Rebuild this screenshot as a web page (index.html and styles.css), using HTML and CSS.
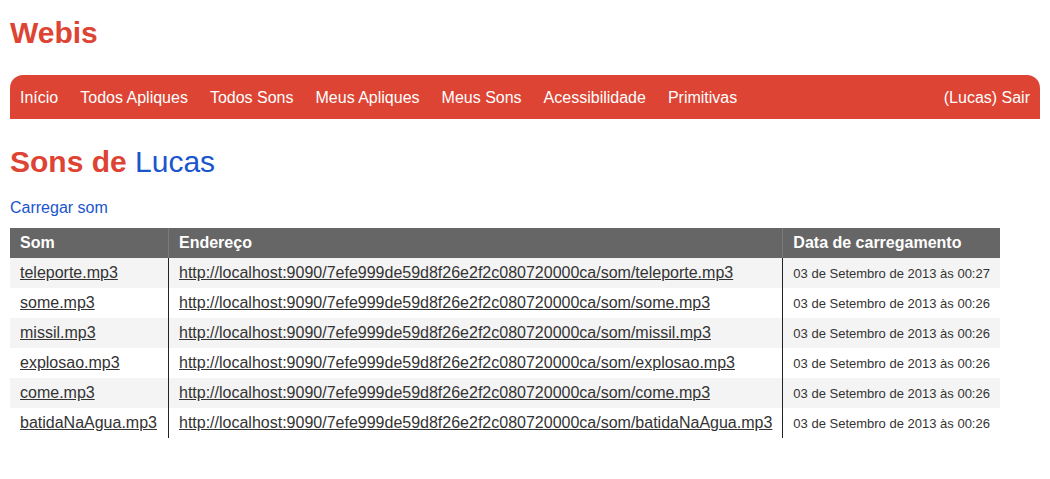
FILE: index.html
```html
<!DOCTYPE html>
<html lang="pt">
<head>
<meta charset="utf-8">
<title>Webis</title>
<link rel="stylesheet" href="styles.css">
</head>
<body>
<header class="site-header">
  <h1 class="logo">Webis</h1>
  <nav class="menu">
    <ul class="menu-left">
      <li><a href="#">Início</a></li>
      <li><a href="#">Todos Apliques</a></li>
      <li><a href="#">Todos Sons</a></li>
      <li><a href="#">Meus Apliques</a></li>
      <li><a href="#">Meus Sons</a></li>
      <li><a href="#">Acessibilidade</a></li>
      <li><a href="#">Primitivas</a></li>
    </ul>
    <a class="menu-right" href="#">(Lucas) Sair</a>
  </nav>
</header>
<main class="content">
  <h2 class="page-title">Sons de <span class="user">Lucas</span></h2>
  <p class="actions"><a href="#">Carregar som</a></p>
  <table class="sounds">
    <thead>
      <tr><th>Som</th><th>Endereço</th><th>Data de carregamento</th></tr>
    </thead>
    <tbody>
      <tr><td><a href="#">teleporte.mp3</a></td><td><a href="#">http://localhost:9090/7efe999de59d8f26e2f2c080720000ca/som/teleporte.mp3</a></td><td class="date">03 de Setembro de 2013 às 00:27</td></tr>
      <tr><td><a href="#">some.mp3</a></td><td><a href="#">http://localhost:9090/7efe999de59d8f26e2f2c080720000ca/som/some.mp3</a></td><td class="date">03 de Setembro de 2013 às 00:26</td></tr>
      <tr><td><a href="#">missil.mp3</a></td><td><a href="#">http://localhost:9090/7efe999de59d8f26e2f2c080720000ca/som/missil.mp3</a></td><td class="date">03 de Setembro de 2013 às 00:26</td></tr>
      <tr><td><a href="#">explosao.mp3</a></td><td><a href="#">http://localhost:9090/7efe999de59d8f26e2f2c080720000ca/som/explosao.mp3</a></td><td class="date">03 de Setembro de 2013 às 00:26</td></tr>
      <tr><td><a href="#">come.mp3</a></td><td><a href="#">http://localhost:9090/7efe999de59d8f26e2f2c080720000ca/som/come.mp3</a></td><td class="date">03 de Setembro de 2013 às 00:26</td></tr>
      <tr><td><a href="#">batidaNaAgua.mp3</a></td><td><a href="#">http://localhost:9090/7efe999de59d8f26e2f2c080720000ca/som/batidaNaAgua.mp3</a></td><td class="date">03 de Setembro de 2013 às 00:26</td></tr>
    </tbody>
  </table>
</main>
</body>
</html>
```
FILE: styles.css
```css
html, body {
  margin: 0;
  padding: 0;
  background: #fff;
}
body {
  font-family: "Liberation Sans", Arial, sans-serif;
  font-size: 16px;
  color: #333;
  padding: 0 10px;
}
.site-header {
  padding-top: 15px;
}
.logo {
  margin: 0;
  font-size: 30px;
  line-height: 36px;
  font-weight: bold;
  color: #dd4433;
}
.menu {
  margin-top: 24px;
  height: 44px;
  background: #dd4433;
  border-radius: 13px 13px 0 0;
  display: flex;
  align-items: center;
  justify-content: space-between;
  padding: 1px 10px 0;
  box-sizing: border-box;
}
.menu-left {
  list-style: none;
  margin: 0;
  padding: 0;
  display: flex;
  gap: 22px;
}
.menu a {
  color: #fff;
  text-decoration: none;
}
.content {
  padding-top: 26px;
}
.page-title {
  margin: 0;
  font-size: 30px;
  line-height: 34px;
  font-weight: bold;
  color: #dd4433;
}
.page-title .user {
  font-weight: normal;
  color: #1a55cc;
}
.actions {
  margin: 19px 0 0;
  line-height: 20px;
}
.actions a {
  color: #1a55cc;
  text-decoration: none;
}
.sounds {
  margin-top: 10px;
  border-collapse: collapse;
}
.sounds th {
  background: #666;
  color: #fff;
  font-weight: bold;
  text-align: left;
  height: 30px;
  padding: 0 10px;
  border-left: 1px solid #7a7a7a;
}
.sounds th:first-child,
.sounds td:first-child {
  border-left: none;
  padding-right: 11px;
}
.sounds td {
  height: 30px;
  padding: 0 10px;
  border-left: 1px solid #222;
  white-space: nowrap;
}
.sounds tbody tr:nth-child(odd) {
  background: #f4f4f4;
}
.sounds td a {
  color: #333;
  text-decoration: underline;
}
.sounds td.date {
  font-size: 13px;
}
```
